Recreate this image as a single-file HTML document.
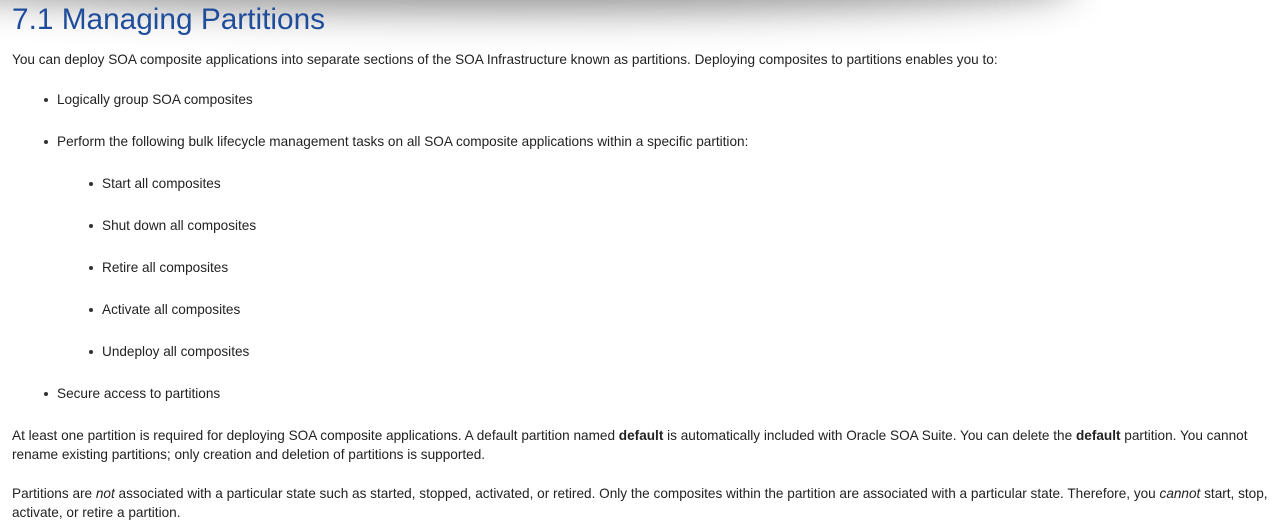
<!DOCTYPE html>
<html><head><style>
html,body{margin:0;padding:0;background:#fff;width:1283px;height:528px;overflow:hidden;position:relative}
body{font-family:"Liberation Sans",Arial,sans-serif;font-size:13.6px;color:#222}
.sh{position:absolute;left:-40px;top:-30px;width:1100px;height:30px;box-shadow:0 0 40px 10px rgba(0,0,0,.45);border-radius:0 0 50% 50%}
h1{position:absolute;left:12px;top:3px;margin:0;font-weight:normal;font-size:29.8px;color:#1f4d9b;white-space:nowrap}
.l{position:absolute;white-space:nowrap;line-height:19px}
.b::before{content:"";position:absolute;left:-13px;top:8px;width:4px;height:4px;border-radius:50%;background:#333}
</style></head><body>
<div class="sh"></div>
<h1>7.1 Managing Partitions</h1>
<div class="l" style="left:12px;top:50px">You can deploy SOA composite applications into separate sections of the SOA Infrastructure known as partitions. Deploying composites to partitions enables you to:</div>
<div class="l b" style="left:57px;top:90px">Logically group SOA composites</div>
<div class="l b" style="left:57px;top:132px">Perform the following bulk lifecycle management tasks on all SOA composite applications within a specific partition:</div>
<div class="l b" style="left:102px;top:174px">Start all composites</div>
<div class="l b" style="left:102px;top:216px">Shut down all composites</div>
<div class="l b" style="left:102px;top:258px">Retire all composites</div>
<div class="l b" style="left:102px;top:300px">Activate all composites</div>
<div class="l b" style="left:102px;top:342px">Undeploy all composites</div>
<div class="l b" style="left:57px;top:384px">Secure access to partitions</div>
<div class="l" style="left:12px;top:426px">At least one partition is required for deploying SOA composite applications. A default partition named <b>default</b> is automatically included with Oracle SOA Suite. You can delete the <b>default</b> partition. You cannot</div>
<div class="l" style="left:12px;top:445px">rename existing partitions; only creation and deletion of partitions is supported.</div>
<div class="l" style="left:12px;top:484px">Partitions are <i>not</i> associated with a particular state such as started, stopped, activated, or retired. Only the composites within the partition are associated with a particular state. Therefore, you <i>cannot</i> start, stop,</div>
<div class="l" style="left:12px;top:503px">activate, or retire a partition.</div>
</body></html>
